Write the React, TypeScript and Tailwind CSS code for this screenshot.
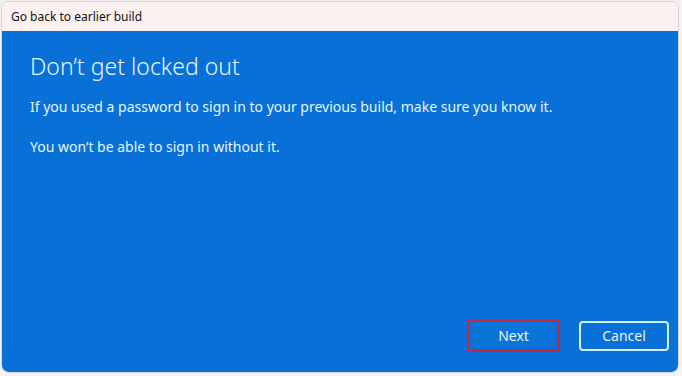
export default function App() {
    return (
        <div className="w-[682px] h-[376px] bg-[#f3f3f3] pl-px pt-px pr-[3px] pb-[3px] font-['Noto_Sans',sans-serif]">
            <div className="flex h-full flex-col overflow-hidden rounded-t-[6px] rounded-b-[8px] border border-[#d6d6d6]">
                {/* title bar */}
                <div className="flex h-[29px] shrink-0 items-center bg-[#fbf1f1] px-[9px] text-[12px] text-[#111]">
                    Go back to earlier build
                </div>

                <div className="flex flex-1 flex-col bg-[#0870d6] pl-[28px] pr-[9px] pt-[20px] pb-[20px] text-[#e4f5ff]">
                    <h1 className="text-[23px] font-light leading-[30px]">Don’t get locked out</h1>
                    <p className="mt-[16px] text-[14px] leading-[20px]">
                        If you used a password to sign in to your previous build, make sure you know it.
                    </p>
                    <p className="mt-[20px] text-[14px] leading-[20px]">
                        You won’t be able to sign in without it.
                    </p>

                    <div className="mt-auto flex items-center justify-end gap-[19px]">
                        <div className="rounded-[3px] border-[3px] border-[#c3283f] p-px">
                            <button className="h-[25px] w-[85px] rounded-[3px] bg-[#0b74d8] text-[14px] text-[#e4f5ff]">
                                Next
                            </button>
                        </div>
                        <button className="h-[30px] w-[90px] rounded-[4px] border-2 border-[#cfeffd] text-[14px] text-[#e4f5ff]">
                            Cancel
                        </button>
                    </div>
                </div>
            </div>
        </div>
    );
}
